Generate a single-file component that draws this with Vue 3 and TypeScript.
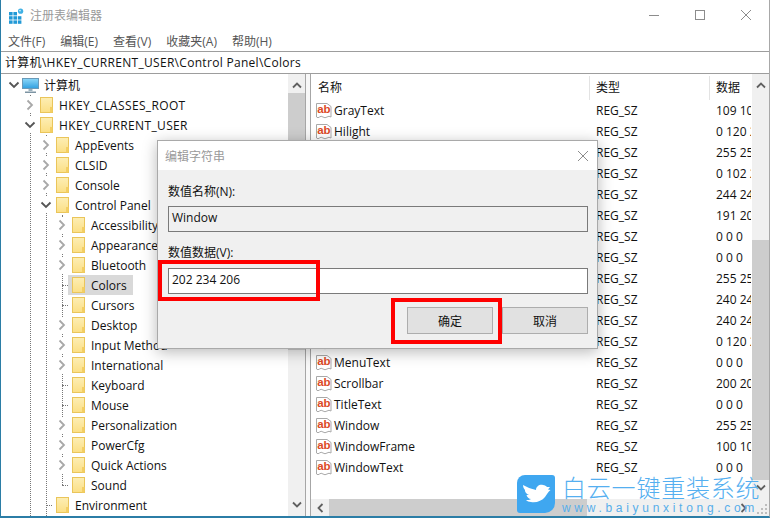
<script setup lang="ts">
interface TreeRow { label: string; level: number; state: 'open' | 'closed' | 'leaf'; selected?: boolean }

const menus: string[] = ['文件(F)', '编辑(E)', '查看(V)', '收藏夹(A)', '帮助(H)']

const treeRows: TreeRow[] = [
  { label: 'HKEY_CLASSES_ROOT', level: 1, state: 'closed' },
  { label: 'HKEY_CURRENT_USER', level: 1, state: 'open' },
  { label: 'AppEvents', level: 2, state: 'closed' },
  { label: 'CLSID', level: 2, state: 'closed' },
  { label: 'Console', level: 2, state: 'closed' },
  { label: 'Control Panel', level: 2, state: 'open' },
  { label: 'Accessibility', level: 3, state: 'closed' },
  { label: 'Appearance', level: 3, state: 'closed' },
  { label: 'Bluetooth', level: 3, state: 'closed' },
  { label: 'Colors', level: 3, state: 'leaf', selected: true },
  { label: 'Cursors', level: 3, state: 'leaf' },
  { label: 'Desktop', level: 3, state: 'closed' },
  { label: 'Input Method', level: 3, state: 'closed' },
  { label: 'International', level: 3, state: 'closed' },
  { label: 'Keyboard', level: 3, state: 'leaf' },
  { label: 'Mouse', level: 3, state: 'leaf' },
  { label: 'Personalization', level: 3, state: 'closed' },
  { label: 'PowerCfg', level: 3, state: 'closed' },
  { label: 'Quick Actions', level: 3, state: 'closed' },
  { label: 'Sound', level: 3, state: 'leaf' },
  { label: 'Environment', level: 2, state: 'leaf' },
]

const values: [string, string][] = [
  ['GrayText', '109 109 109'],
  ['Hilight', '0 120 215'],
  ['HilightText', '255 255 255'],
  ['HotTrackingColor', '0 102 204'],
  ['InactiveBorder', '244 247 252'],
  ['InactiveTitle', '191 205 219'],
  ['InactiveTitleText', '0 0 0'],
  ['InfoText', '0 0 0'],
  ['InfoWindow', '255 255 225'],
  ['Menu', '240 240 240'],
  ['MenuBar', '240 240 240'],
  ['MenuHilight', '0 120 215'],
  ['MenuText', '0 0 0'],
  ['Scrollbar', '200 200 200'],
  ['TitleText', '0 0 0'],
  ['Window', '255 255 255'],
  ['WindowFrame', '100 100 100'],
  ['WindowText', '0 0 0'],
]
</script>

<template>
  <div class="win">
    <header class="title">
      <svg class="app-icon" width="15" height="16" viewBox="0 0 15 16">
        <g fill="#2299d6">
          <rect x="0" y="4" width="3.6" height="3.4" />
          <rect x="4.4" y="4" width="3.6" height="3.4" />
          <rect x="0" y="8.2" width="3.6" height="3.4" />
          <rect x="4.4" y="8.2" width="3.6" height="3.4" />
          <rect x="8.8" y="8.2" width="3.6" height="3.4" />
          <rect x="0" y="12.4" width="3.6" height="3.4" />
          <rect x="4.4" y="12.4" width="3.6" height="3.4" />
          <rect x="8.8" y="12.4" width="3.6" height="3.4" />
        </g>
        <circle cx="11.6" cy="3.2" r="2.6" fill="#3fb0e4" />
        <circle cx="11" cy="2.6" r="0.9" fill="#c9ecfa" />
      </svg>
      <span class="title-text">注册表编辑器</span>
      <div class="controls">
        <svg width="12" height="12" viewBox="0 0 12 12"><path d="M1 6.5h10" stroke="#8c8c8c" fill="none" /></svg>
        <svg width="12" height="12" viewBox="0 0 12 12"><rect x="1.5" y="1.5" width="9" height="9" stroke="#8c8c8c" fill="none" /></svg>
        <svg width="12" height="12" viewBox="0 0 12 12"><path d="M1 1l10 10M11 1L1 11" stroke="#8c8c8c" fill="none" /></svg>
      </div>
    </header>

    <nav class="menu">
      <span v-for="m in menus" :key="m">{{ m }}</span>
    </nav>

    <div class="address">计算机\HKEY_CURRENT_USER\Control Panel\Colors</div>

    <main class="panes">
      <section class="tree-pane">
        <div class="tree">
          <i class="guide g1"></i>
          <i class="guide g2"></i>
          <i class="guide g3"></i>
          <div class="row root-row">
            <span class="chev root-chev">
              <svg width="12" height="8" viewBox="0 0 12 8"><path d="M1.5 1.5L6 6l4.500-4.500" fill="none" stroke="#555" stroke-width="1.800" /></svg>
            </span>
            <svg class="pc" width="17" height="17" viewBox="0 0 17 17">
              <defs>
                <linearGradient id="scr" x1="0" y1="0" x2="0" y2="1">
                  <stop offset="0" stop-color="#8ed8f8" />
                  <stop offset="1" stop-color="#2f9fe0" />
                </linearGradient>
              </defs>
              <rect x="0.500" y="1.500" width="16" height="10" fill="url(#scr)" stroke="#6a9ab8" />
              <path d="M6.500 12h4v2h-4z" fill="#9ab0bd" />
              <path d="M3 14.500h11v1.500H3z" fill="#7d94a3" />
            </svg>
            <span class="label">计算机</span>
          </div>
          <div
            v-for="r in treeRows"
            :key="r.label"
            class="row"
            :class="'lv' + r.level"
          >
            <span class="chev" :class="{ tick: r.state === 'leaf' }">
              <svg v-if="r.state === 'closed'" width="8" height="12" viewBox="0 0 8 12"><path d="M1.500 1.500L6 6l-4.500 4.500" fill="none" stroke="#a8a8a8" stroke-width="1.800" /></svg>
              <svg v-else-if="r.state === 'open'" width="12" height="8" viewBox="0 0 12 8"><path d="M1.500 1.500L6 6l4.500-4.500" fill="none" stroke="#555" stroke-width="1.800" /></svg>
            </span>
            <span class="node" :class="{ selected: r.selected }">
              <svg class="folder" width="13" height="16" viewBox="0 0 13 16">
                <defs>
                  <linearGradient :id="'f' + r.label.replace(/\W/g, '')" x1="0" y1="0" x2="0" y2="1">
                    <stop offset="0" stop-color="#fdeeb4" />
                    <stop offset="1" stop-color="#fbdf85" />
                  </linearGradient>
                </defs>
                <rect x="0.500" y="0.500" width="12" height="15" :fill="`url(#f${r.label.replace(/\W/g, '')})`" stroke="#eac55a" />
                <rect x="10" y="10" width="2.500" height="5.500" fill="#f4cf63" />
              </svg>
              <span class="label">{{ r.label }}</span>
            </span>
          </div>
        </div>
        <aside class="vbar">
          <svg class="arr" width="10" height="7" viewBox="0 0 10 7"><path d="M1 5.500L5 1.500l4 4" fill="none" stroke="#606060" stroke-width="1.800" /></svg>
          <div class="vtrack"><div class="vthumb"></div></div>
          <svg class="arr" width="10" height="7" viewBox="0 0 10 7"><path d="M1 1.500l4 4 4-4" fill="none" stroke="#606060" stroke-width="1.800" /></svg>
        </aside>
      </section>

      <div class="split"></div>

      <section class="list-pane">
        <div class="list-top">
          <div class="list">
            <div class="head">
              <span class="col c-name">名称</span>
              <span class="col c-type">类型</span>
              <span class="col c-data">数据</span>
            </div>
            <div v-for="v in values" :key="v[0]" class="item">
              <span class="col c-name">
                <svg class="ab" width="16" height="17" viewBox="0 0 16 17">
                  <path d="M0.500 1.500H11l4 3v10.500q-2-1.500-4 0t-4 0-3.500 0-3 0z" fill="#fff" stroke="#a9a9a9" />
                  <text x="1.200" y="11" class="ab-t">ab</text>
                </svg>
                <span>{{ v[0] }}</span>
              </span>
              <span class="col c-type">REG_SZ</span>
              <span class="col c-data">{{ v[1] }}</span>
            </div>
          </div>
          <aside class="vbar right">
            <svg class="arr" width="10" height="7" viewBox="0 0 10 7"><path d="M1 5.500L5 1.500l4 4" fill="none" stroke="#606060" stroke-width="1.800" /></svg>
            <div class="vtrack end"><div class="vthumb long"></div></div>
            <svg class="arr" width="10" height="7" viewBox="0 0 10 7"><path d="M1 1.500l4 4 4-4" fill="none" stroke="#606060" stroke-width="1.800" /></svg>
          </aside>
        </div>
        <div class="hbar">
          <span class="h-arr"><svg width="7" height="10" viewBox="0 0 7 10"><path d="M5.500 1L1.500 5l4 4" fill="none" stroke="#606060" stroke-width="1.800" /></svg></span>
          <div class="hthumb"></div>
          <div class="htrack"></div>
          <span class="h-arr"><svg width="7" height="10" viewBox="0 0 7 10"><path d="M1.500 1l4 4-4 4" fill="none" stroke="#606060" stroke-width="1.800" /></svg></span>
          <span class="corner">
            <svg width="12" height="12" viewBox="0 0 12 12" fill="#bdbdbd">
              <rect x="8" y="0" width="2" height="2" />
              <rect x="4" y="4" width="2" height="2" />
              <rect x="8" y="4" width="2" height="2" />
              <rect x="0" y="8" width="2" height="2" />
              <rect x="4" y="8" width="2" height="2" />
              <rect x="8" y="8" width="2" height="2" />
            </svg>
          </span>
        </div>
      </section>
    </main>

    <div class="dialog">
      <div class="d-title">
        <span>编辑字符串</span>
        <svg width="12" height="12" viewBox="0 0 12 12"><path d="M1 1l10 10M11 1L1 11" stroke="#8c8c8c" fill="none" /></svg>
      </div>
      <div class="d-body">
        <label class="d-label">数值名称(N):</label>
        <div class="d-input ro">Window</div>
        <label class="d-label second">数值数据(V):</label>
        <div class="d-input val">202 234 206</div>
        <div class="d-btns">
          <button class="btn ok">确定</button>
          <button class="btn">取消</button>
        </div>
      </div>
      <div class="red r1"></div>
      <div class="red r2"></div>
    </div>

    <div class="mark">
      <div class="logo">
        <svg width="38" height="38" viewBox="0 0 38 38">
          <path fill="#fff" d="M6 10C10 12 14 14 19 15C19 11 23 9 26 10C28 10 29 11 30 12L33 12L31 14.500L33.500 15C31 17 30 19 28 22C25 26 19 28 14 27C12 27 10 26 9 25C11 25 13 25 14 24C12 24 10 22 9.500 20L12 20C9 19 7.500 16 8 15C7 14 6 12 6 10Z" />
        </svg>
      </div>
      <div class="brand">
        <div class="brand-cn">白云一键重装系统</div>
        <div class="brand-url">www.baiyunxitong.com</div>
      </div>
    </div>
  </div>
</template>

<style scoped>
.win {
  position: relative;
  width: 770px;
  height: 518px;
  box-sizing: border-box;
  overflow: hidden;
  display: flex;
  flex-direction: column;
  background: #fff;
  border-left: 1px solid #2b7da6;
  border-right: 1px solid #a8a8a8;
  border-bottom: 2px solid #2b7da6;
  font-family: "Open Sans", "Noto Sans CJK SC", sans-serif;
  font-size: 12px;
  color: #111;
}
.title {
  height: 30px;
  display: flex;
  align-items: center;
  padding-left: 8px;
  flex: none;
}
.app-icon { margin-top: 1px; }
.title-text { margin-left: 6px; color: #9a9a9a; }
.controls {
  margin-left: auto;
  display: flex;
  gap: 34px;
  padding-right: 17px;
}
.menu {
  height: 21px;
  flex: none;
  display: flex;
  align-items: center;
  gap: 15px;
  padding-left: 7px;
  color: #555;
}
.address {
  height: 21px;
  flex: none;
  line-height: 21px;
  padding-left: 4px;
  border-top: 1px solid #9d9d9d;
  border-bottom: 1px solid #9d9d9d;
  white-space: nowrap;
  letter-spacing: 0.3px;
}
.panes {
  flex: 1;
  display: flex;
  min-height: 0;
}
.tree-pane {
  width: 304px;
  flex: none;
  display: flex;
  border-right: 1px solid #a6a6a6;
}
.tree {
  position: relative;
  flex: 1;
  padding-top: 1px;
  overflow: hidden;
}
.guide {
  position: absolute;
  width: 0;
  border-left: 1px dotted #777;
}
.g1 { left: 29px; top: 21px; bottom: 0; }
.g2 { left: 45px; top: 61px; bottom: 0; }
.g3 { left: 61px; top: 141px; height: 270px; }
.row {
  position: relative;
  height: 20px;
  display: flex;
  align-items: center;
  white-space: nowrap;
}
.root-row { padding-left: 6px; }
.root-chev { width: 14px !important; }
.pc { margin-left: 1px; margin-right: 5px; }
.lv1 { padding-left: 21px; letter-spacing: 0.35px; }
.lv2 { padding-left: 37px; }
.lv3 { padding-left: 53px; }
.chev {
  position: relative;
  width: 16px;
  height: 16px;
  flex: none;
  display: flex;
  align-items: center;
  justify-content: center;
}
.chev:not(.tick) { background: #fff; }
.tick::after {
  content: "";
  position: absolute;
  left: 8px;
  top: 8px;
  width: 6px;
  border-top: 1px dotted #777;
}
.node {
  height: 20px;
  display: flex;
  align-items: center;
  padding: 0 4px 0 2px;
}
.node.selected { background: #d9d9d9; margin-left: -2px; padding: 0 6px 0 4px; }
.folder { margin-right: 6px; flex: none; }
.vbar {
  width: 17px;
  flex: none;
  background: #f0f0f0;
  display: flex;
  flex-direction: column;
  align-items: center;
  padding: 8px 0 8px;
  box-sizing: border-box;
}
.arr { flex: none; }
.vtrack {
  flex: 1;
  width: 100%;
  margin: 4px 0 4px;
  display: flex;
  flex-direction: column;
}
.vtrack.end { justify-content: flex-end; }
.vthumb {
  width: 100%;
  height: 257px;
  background: #cdcdcd;
}
.vthumb.long { height: 240px; }
.split { width: 4px; flex: none; background: #f8f8f8; }
.list-pane {
  flex: 1;
  min-width: 0;
  display: flex;
  flex-direction: column;
  border-left: 1px solid #a6a6a6;
}
.list-top { flex: 1; display: flex; min-height: 0; }
.list { flex: 1; min-width: 0; overflow: hidden; }
.head {
  height: 26px;
  display: flex;
  align-items: center;
}
.head .col { height: 24px; margin-top: 2px; line-height: 22px; }
.head .c-type, .head .c-data { border-left: 1px solid #e3e3e3; }
.item {
  height: 21px;
  display: flex;
  align-items: center;
}
.col {
  box-sizing: border-box;
  display: flex;
  align-items: center;
  white-space: nowrap;
  overflow: hidden;
  flex: none;
}
.c-name { width: 278px; padding-left: 7px; }
.c-type { width: 120px; padding-left: 6px; }
.c-data { width: 42px; padding-left: 6px; }
.item .c-name { padding-left: 5px; }
.item .c-type, .item .c-data { padding-left: 7px; }
.ab { flex: none; margin-right: 2px; }
.ab-t {
  font-family: "Liberation Sans", sans-serif;
  font-weight: 700;
  font-size: 11.5px;
  fill: #dc4a26;
}
.hbar {
  height: 17px;
  flex: none;
  display: flex;
  background: #f0f0f0;
}
.h-arr {
  width: 18px;
  flex: none;
  display: flex;
  align-items: center;
  justify-content: center;
}
.hthumb { width: 258px; background: #cdcdcd; }
.htrack { flex: 1; }
.corner {
  width: 17px;
  flex: none;
  display: flex;
  justify-content: flex-end;
  align-items: flex-end;
}
.dialog {
  position: absolute;
  left: 156px;
  top: 140px;
  width: 441px;
  height: 209px;
  box-sizing: border-box;
  border: 1px solid #a9a9a9;
  background: #f0f0f0;
  box-shadow: 0 3px 14px rgba(0, 0, 0, 0.28);
  display: flex;
  flex-direction: column;
}
.d-title {
  height: 29px;
  flex: none;
  background: #fff;
  display: flex;
  align-items: center;
  justify-content: space-between;
  padding: 0 8px 0 7px;
  color: #9a9a9a;
}
.d-body {
  flex: 1;
  padding: 13px 9px 0 10px;
}
.d-label { display: block; height: 17px; line-height: 17px; }
.d-label.second { margin-top: 12px; }
.d-input {
  box-sizing: border-box;
  height: 26px;
  margin-top: 6px;
  line-height: 22px;
  padding-left: 3px;
  border: 1px solid #7a7a7a;
  background: #fff;
}
.d-input.val { margin-top: 7px; }
.d-input.ro { background: #f0f0f0; }
.d-btns {
  display: flex;
  justify-content: flex-end;
  gap: 9px;
  margin-top: 13px;
}
.btn {
  width: 86px;
  height: 27px;
  padding: 0;
  font: inherit;
  color: #111;
  background: #e1e1e1;
  border: 1px solid #adadad;
}
.red {
  position: absolute;
  box-sizing: border-box;
  border: 4px solid #f00;
}
.r1 { left: 0; top: 119px; width: 162px; height: 41px; }
.r2 { left: 233px; top: 157px; width: 111px; height: 46px; }
.mark {
  position: absolute;
  left: 516px;
  top: 475px;
  display: flex;
  gap: 7px;
}
.logo {
  width: 38px;
  height: 38px;
  border-radius: 8px 3px 10px 3px;
  background: #3fa7f0;
}
.brand { width: 200px; margin-top: -1px; }
.brand-cn {
  font-size: 24px;
  font-weight: 300;
  line-height: 28px;
  letter-spacing: 0.8px;
  color: #55aff0;
  white-space: nowrap;
}
.brand-url {
  font-family: "Liberation Sans", sans-serif;
  font-size: 12px;
  line-height: 12px;
  letter-spacing: 3.700px;
  color: #57aeea;
  white-space: nowrap;
}
</style>
